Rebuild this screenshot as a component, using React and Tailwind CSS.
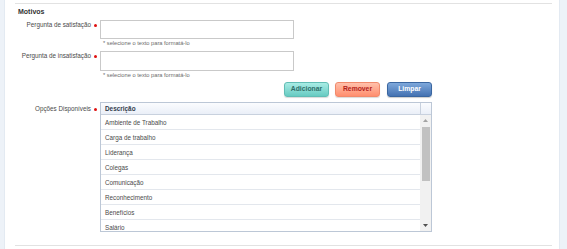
import React from "react";

const rows = [
  "Ambiente de Trabalho",
  "Carga de trabalho",
  "Liderança",
  "Colegas",
  "Comunicação",
  "Reconhecimento",
  "Benefícios",
  "Salário",
];

function Dot({ pt = "pt-[4px]" }) {
  return <span className={"w-[9px] flex justify-center " + pt}><span className="block w-[3px] h-[3px] bg-[#e01010] rounded-full" /></span>;
}

export default function App() {
  return (
    <div
      className="w-[567px] h-[249px] flex bg-white overflow-hidden text-[#4a4a4a]"
      style={{ fontFamily: '"Liberation Sans", Arial, sans-serif' }}
    >
      <div className="w-[5px] bg-[#edf2f8] border-r border-[#e3eaf2]" />
      <div className="flex-1 flex flex-col">
        <div className="ml-[10px] mr-[7px] mt-[3px] border-t border-[#e2e2e2]" />
        <div className="ml-[13px] mt-[2px] h-[12px] leading-[12px] text-[7px] font-bold text-[#333]">Motivos</div>

        {/* row 1 */}
        <div className="flex mt-[2px] ml-[10px]">
          <div className="w-[76px] text-right text-[6.3px] leading-[10px] whitespace-nowrap">Pergunta de satisfação</div>
          <Dot />
          <div className="flex flex-col">
            <div className="w-[194px] h-[19px] border border-[#c9c9c9] bg-white" />
            <div className="pl-[3px] h-[8px] leading-[8px] text-[5.7px] text-[#6a6a6a] whitespace-nowrap">* selecione o texto para formatá-lo</div>
          </div>
        </div>

        {/* row 2 */}
        <div className="flex mt-[4px] ml-[10px]">
          <div className="w-[76px] text-right text-[6.3px] leading-[10px] whitespace-nowrap">Pergunta de insatisfação</div>
          <Dot />
          <div className="flex flex-col">
            <div className="w-[194px] h-[20px] border border-[#c9c9c9] bg-white" />
            <div className="pl-[3px] h-[8px] leading-[8px] text-[5.7px] text-[#6a6a6a] whitespace-nowrap">* selecione o texto para formatá-lo</div>
          </div>
        </div>

        {/* buttons */}
        <div className="flex ml-[279px] w-[148px] mt-[3px] h-[15px]">
          <button className="w-[45px] h-[15px] rounded-[3px] border border-[#62bdb5] bg-gradient-to-b from-[#a8ece5] to-[#66cbc2] text-[6.8px] font-bold text-[#2f6f6a] shadow-[0_1px_1px_rgba(0,0,0,0.15)]">Adicionar</button>
          <button className="ml-[6px] w-[45px] h-[15px] rounded-[3px] border border-[#f08a6c] bg-gradient-to-b from-[#ffc0ab] to-[#ff8e6e] text-[6.8px] font-bold text-[#b3221a] shadow-[0_1px_1px_rgba(0,0,0,0.15)]">Remover</button>
          <button className="ml-[7px] w-[45px] h-[15px] rounded-[3px] border border-[#3a66a0] bg-gradient-to-b from-[#7ea8db] to-[#4472b2] text-[6.8px] font-bold text-white shadow-[0_1px_1px_rgba(0,0,0,0.2)]">Limpar</button>
        </div>

        {/* table row */}
        <div className="flex mt-[5px] ml-[10px]">
          <div className="w-[76px] text-right text-[6.3px] leading-[10px] pt-[2px] whitespace-nowrap">Opções Disponíveis</div>
          <Dot pt="pt-[6px]" />
          <div className="w-[332px] h-[130px] border border-[#bcc7d6] flex flex-col">
            <div className="flex h-[12px] border-b border-[#c8d1de] bg-gradient-to-b from-[#fbfcfe] to-[#eaeff8]">
              <div className="flex-1 pl-[4px] text-[6.4px] leading-[12px] font-bold text-[#333d4c]">Descrição</div>
              <div className="w-[11px] border-l border-[#c8d1de]" />
            </div>
            <div className="flex flex-1 overflow-hidden">
              <div className="flex-1 flex flex-col overflow-hidden">
                {rows.map((r) => (
                  <div key={r} className="h-[15px] shrink-0 border-b border-[#e3e7ed] pl-[4px] text-[6.3px] leading-[15px] text-[#4a4a4a]">{r}</div>
                ))}
              </div>
              <div className="w-[11px] bg-[#f1f1f1] flex flex-col items-center">
                <svg width="11" height="11" viewBox="0 0 11 11" className="shrink-0"><path d="M3 7 L5.5 4 L8 7 Z" fill="#a3a3a3" /></svg>
                <div className="w-[8px] h-[54px] bg-[#c1c1c1] mt-[1px]" />
                <div className="flex-1" />
                <svg width="11" height="11" viewBox="0 0 11 11" className="shrink-0"><path d="M3 4 L5.5 7 L8 4 Z" fill="#505050" /></svg>
              </div>
            </div>
          </div>
        </div>

        <div className="flex-1" />
        <div className="ml-[10px] mr-[7px] mb-[3px] border-t border-[#e2e2e2]" />
      </div>
      <div className="w-[8px] bg-[#edf2f8] border-l border-[#e3eaf2]" />
    </div>
  );
}
